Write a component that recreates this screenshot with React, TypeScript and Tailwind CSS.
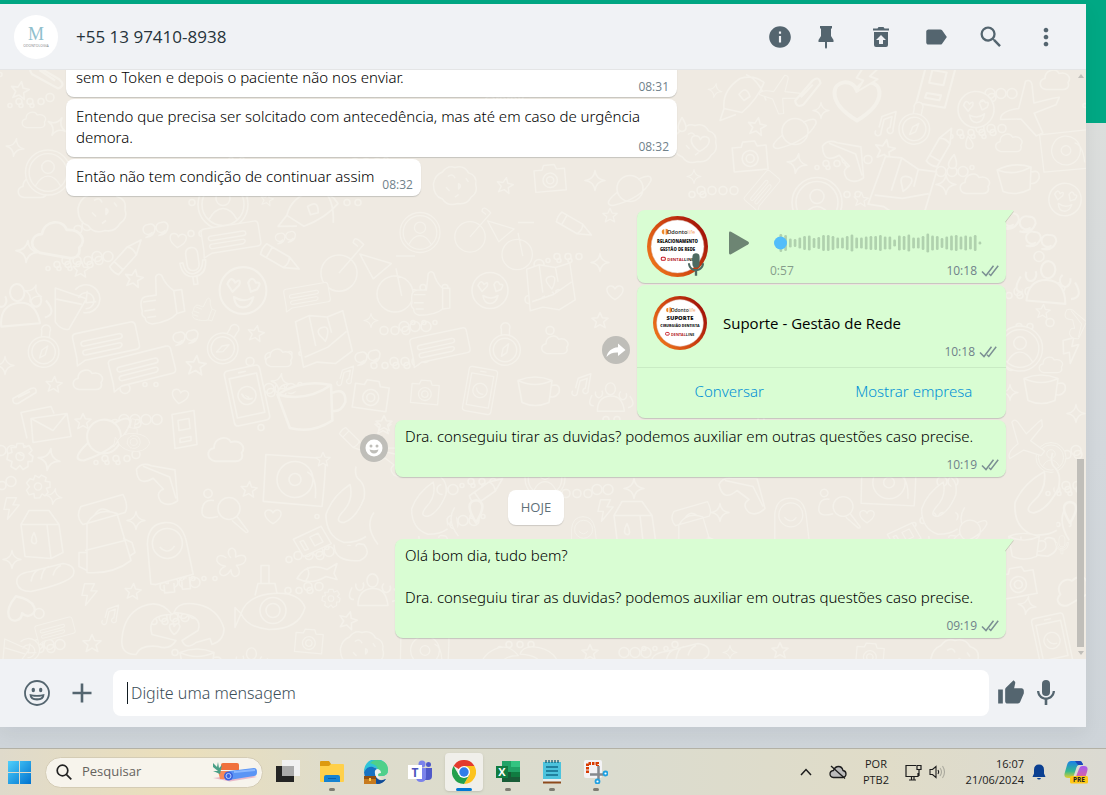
import type { ReactNode } from 'react';
import { MdInfo, MdLabel, MdMoreVert, MdSearch, MdThumbUp } from 'react-icons/md';

const WAVE = [
  18, 16, 9, 8, 11, 14, 15, 10, 12, 16, 16, 14, 11, 11, 14, 17, 11, 11, 13, 14, 14, 16, 13, 13, 7, 15, 14, 17, 11,
  11, 14, 19, 15, 14, 10, 13, 15, 16, 13, 15, 13, 16, 3,
];

// Line doodles of the chat wallpaper, each drawn around 0,0
const SHAPES: Record<string, ReactNode> = {
  star: <path d="M0-9 2.6-3 9-2.6 4 1.6 5.8 8 0 4.6-5.8 8-4 1.6-9-2.6-2.6-3Z" />,
  spark: <path d="M0-10Q1-1 10 0 1 1 0 10-1 1-10 0-1-1 0-10Z" />,
  heart: <path d="M0 8C-5 5-9 1-9-3-9-8-2-9 0-4 2-9 9-8 9-3 9 1 5 5 0 8Z" />,
  cloud: <path d="M-9 9C-17 7-16-1-10-2-10-11 1-13 4-7 12-9 17-3 13 2 15 7 11 9 8 9Z" />,
  bubble: (
    <path d="M-28-14H28Q32-14 32-10V10Q32 14 28 14H-24L-33 18-32 10V-10Q-32-14-28-14ZM-22-5H14Q17-5 17-2.500T14 0H-22Q-25 0-25-2.500T-22-5ZM-22 4H12Q15 4 15 6T12 9H-22Q-25 9-25 6.500T-22 4Z" />
  ),
  pencil: <path d="M-18-5H6L19 0 6 6H-18Q-20 0-18-5ZM-12-5V6M6-5Q9 0 6 6" />,
  mic: <path d="M0-16Q6-16 6-9V0Q6 7 0 7T-6 0V-9Q-6-16 0-16ZM-13-2Q-12 13 0 13T13-2H10Q9 9 0 10T-10-2ZM-2 13V21H2V13" />,
  thumb: (
    <path d="M-20 8Q-22-6-14-6H-4L-2-24Q0-28 4-25 7-14 14-8L22-8V14L14 15Q6 22-12 22-19 20-18 15-22 12-20 8ZM-18-1H-5M-18 8H-7M-16 15H-7M14-8V15" />
  ),
  face: <path d="M-18 0A18 18 0 1 0 18 0 18 18 0 1 0-18 0ZM-12-5Q-9-12-6-6-1-10-3-4L-8 1ZM4-6Q7-12 10-6 15-7 11-1L6 1ZM-7 5Q1 10 8 5 6 13 0 13T-7 5Z" />,
  camera: <path d="M-17-10H-8L-6-15H6L8-10H17V14H-17ZM-8 2A8 8 0 1 0 8 2 8 8 0 1 0-8 2ZM-4 2A4 4 0 1 0 4 2 4 4 0 1 0-4 2Z" />,
  phone: <path d="M-18-24Q-18-28-14-28H14Q18-28 18-24V24Q18 28 14 28H-14Q-18 28-18 24ZM-14-20H14V20H-14ZM-4-24H4M-9 0A9 9 0 1 0 9 0 9 9 0 1 0-9 0ZM-5-3Q-3 5 5 4" />,
  compass: <path d="M-17 5A17 17 0 1 0 17 5 17 17 0 1 0-17 5ZM-13 5A13 13 0 1 0 13 5 13 13 0 1 0-13 5ZM4-2 2 8-4 12-2 3ZM-4-12V-18A5 5 0 1 1 5-18V-12" />,
  disc: <path d="M-25 0A25 25 0 1 0 25 0 25 25 0 1 0-25 0ZM-21 0A21 21 0 1 0 21 0 21 21 0 1 0-21 0ZM-7-6A7 7 0 1 0 7-6 7 7 0 1 0-7-6ZM-14 15Q-8 4 0 4T14 15" />,
  drink: <path d="M-18-14 14-6-1 26Q-8 28-15 20ZM-16-3 10 0M2-14A14 14 0 1 1 12 8M6-6A8 8 0 1 1 14 4M14-14V-2L24-4" />,
  bike: <path d="M-19 8A19 19 0 1 0 19 8 19 19 0 1 0-19 8ZM0 8 26-22Q16-33 15-24L20-20M22-12 55-2 36 14ZM60 3 66 32M60-10H80M40 30A19 19 0 1 0 78 30 19 19 0 1 0 40 30Z" />,
  map: <path d="M-26-18-12-23 6-20 22-25 28 16 10 27-8 24-22 28ZM-20 18 4 10 24-4M-12-23-8 8M6-20 9-4M-1 0Q-8-8 0-10T4 0L2 4Z" />,
  rocket: <path d="M-20 12Q-22-6-4-18 10-22 20-14 14 2-2 16ZM2-22Q16-16 22 4M-20 12-24 24-8 18M-5-2Q2-12 6 0L0 4Z" />,
  planet: <path d="M-13 0A13 13 0 1 0 13 0 13 13 0 1 0-13 0ZM-13 4Q-28 16-17 17 12 10 21-8 22-16 8-9" />,
  glasses: <path d="M-26-12Q-22-20-12-18L12-18 20 12Q12 20 4 16-4 8 4 3L-8-6Q-22 6-26-12ZM-20-16 8-10 18 10" />,
  plane: <path d="M-4-26Q2-30 4-20L8-6 26-14 32-16 30-8 10 4 22 22 16 26-2 12-22 16Q-24 8-6 2Z" />,
  mug: <path d="M-17-10Q0-17 17-10L14 12Q0 18-13 12ZM-17-10Q0-2 17-10M17-5Q26-7 24 2 20 8 15 6" />,
  envelope: <path d="M-18-8 18-13 22 10-16 16ZM-18-8 4 4 18-13M-22 12-28-14 2-20 5-13" />,
  paw: <path d="M-6-8Q-18-10-18 4-17 12-2 8M-2 0A11 11 0 1 0 20 0 11 11 0 1 0-2 0ZM17 8 26 20Q30 24 26 24L12 12M-16-14A4 4 0 1 0-8-16 4 4 0 1 0-16-14Z" />,
  gear: <path d="M-3-13H3L4-9 9-11 12-6 9-3 13 0 12 5 8 5 8 10 3 13 0 9-4 13-9 10-8 5-13 3-12-3-8-4-9-9-4-9ZM-4 0A4 4 0 1 0 4 0 4 4 0 1 0-4 0Z" />,
  bag: <path d="M-20-24 22-36Q28-24 24-18L-18-6Q-26-14-20-24ZM-14-7Q-4-24 16-17L30 30Q12 44-14 42ZM-16 20 24 10M-6-16Q0-26 10-18M-14 22H-22V36L-14 40M22 8 31 12 34 22 28 26" />,
  carton: <path d="M-20-10-12-24H8L18-10 22 18 10 24-16 22ZM-20-10H6L18-10M6-10 10 24M-7-2Q-12 8-7 9T-7-2Z" />,
  bread: <path d="M-28 8Q-30-2-14-4L18-12Q32-10 28 0 22 8-14 16-26 16-28 8ZM-14 6Q-12-4-6-6M-4 4Q-2-8 4-9M8 0Q10-8 16-10" />,
  person: <path d="M-19 32V-8Q-17-28 0-28T20-8L24 26-14 33ZM-14-7A15 15 0 1 0 16-7 15 15 0 1 0-14-7ZM-7-4Q1 5 8-4M-6 34V42H4V33M12 32V40H20V28" />,
  hands: <path d="M-52 18Q-50-6-32-14T-2-6Q-28-6-22 14L2 20Q-4 30-16 26-34 24-38 34-54 34-52 18ZM50 8Q44-12 24-16T0-8Q30-6 24 10L8 20Q12 30 22 22L36 18 38 24Q50 20 50 8ZM0 14Q-6 8-4 4 0 2 0 6 4 0 6 6 4 12 0 14Z" />,
  flower: <path d="M0-5C-10-16 8-22 5-6 20-14 20 4 6 3 16 14 0 22 0 8-8 22-20 10-6 4-22 2-16-14-5-5" />,
  record: <path d="M-30-24 30-22Q30 0 28 26L-31 23ZM-18 0A18 18 0 1 0 18 0 18 18 0 1 0-18 0ZM-6 0A6 6 0 1 0 6 0 6 6 0 1 0-6 0ZM12-8Q22-4 21 18" />,
  submarine: <path d="M-32 6Q-26-12 0-14T32 0Q26 22-4 22-26 20-32 6ZM-13 3A13 13 0 1 0 13 3 13 13 0 1 0-13 3ZM-7 3A7 7 0 1 0 7 3 7 7 0 1 0-7 3ZM-18-12-15-24H2L4-14M-12-24V-42H-4V-24M-32 6-38 0V20Z" />,
  octopus: <path d="M4-44Q2-34 8-30 14-24 12-12 4 8-8 12-18 12-10 2 2-10-2-26-20-14-26 4-26 26-8 32 6 32 14 26M22 2Q12 16 26 34M-18 34Q-18 52 8 50 20 44 12 34 4 32 4 36" />,
  people: <path d="M-14 12Q-14-4 0-5T16 12ZM-5-13A5 6 0 1 0 6-13 5 6 0 1 0-5-13ZM-18 6Q-26 6-20-6M20 8Q30 6 22-5M-16-10A4 5 0 1 0-9-11M12-10A4 5 0 1 0 18-8" />,
  fish: <path d="M-20 5Q-10-12 10-4L20-10 17 0 20 6 9 3Q-6 12-20 5ZM-10-6Q-6 0-11 7" />,
  bolt: <path d="M-6-12H5L1-4H8L-5 12-3 1H-9Z" />,
  note: <path d="M-8 6A3 3 0 1 0-3 8L0-5 8-8 6 3A3 3 0 1 0 9 5L12-13-2-8-5 3" />,
  clip: <path d="M-12 4 6-6Q12-8 11-2L-7 9Q-13 10-12 4ZM-7 3 5-3" />,
  card: <path d="M-11-16 11-20 14 14-8 18ZM-5-10 6-12 7-2-4 0ZM-3 8 8 6V10L-3 12Z" />,
  quote: <path d="M-7-5A5 5 0 1 0-3 3Q-5 7-9 8 0 7 0-2-2-7-7-5ZM6-7A5 5 0 1 0 10 1Q8 5 4 6 13 5 13-4 11-9 6-7Z" />,
  cookie: <path d="M-24-2Q-22-12-14-15-8-23 0-20 10-23 15-14 25-11 23-1 26 8 18 13 13 22 3 20-8 24-14 15-24 12-24-2ZM-8-10Q-2-14 0-8M4-2Q8 0 4 4ZM-10 2-6 6M4 10 0 13M12-8 15-4" />,
  drop: <path d="M0-7Q8 6 0 7-8 6 0-7Z" />,
};

const DOODLES: [string, number, number, number, number][] = [
  ['star', 20, 90, 1, 10], ['clip', 48, 76, 1.4, 60], ['cloud', 33, 188, 1, 0], ['cloud', 34, 120, 0.8, 0],
  ['spark', 15, 147, 0.9, 10], ['spark', 57, 126, 1, 30], ['disc', 48, 172, 0.9, 0], ['cookie', 102, 210, 1, 0],
  ['cloud', 58, 240, 1.7, 10], ['disc', 223, 204, 1, 0], ['rocket', 312, 210, 1.1, 20], ['star', 267, 199, 0.7, 10],
  ['spark', 27, 251, 1.1, 5], ['star', 81, 269, 0.9, 5], ['pencil', 127, 255, 1.1, -48], ['quote', 155, 229, 1, 0],
  ['heart', 178, 240, 0.9, 5], ['star', 134, 278, 1, 10], ['mic', 193, 263, 1, -8], ['bubble', 231, 237, 0.9, -9],
  ['pencil', 281, 258, 1.1, 30], ['quote', 285, 237, 0.8, 0], ['thumb', 161, 300, 1, -8], ['face', 243, 290, 1.3, 0],
  ['people', 18, 309, 1.3, -5], ['spark', 33, 293, 0.9, 20], ['drink', 72, 303, 1, 5], ['compass', 44, 347, 0.9, 5],
  ['bike', 339, 265, 0.95, 0], ['map', 323, 337, 1, -5], ['bubble', 106, 341, 1, -12], ['bubble', 142, 366, 1, -14],
  ['cloud', 88, 380, 1, 0], ['quote', 185, 337, 1, 0], ['star', 196, 365, 1.1, 5], ['compass', 225, 344, 0.9, 30],
  ['star', 256, 333, 0.9, 10], ['cloud', 279, 358, 0.9, 0], ['phone', 247, 395, 1, -12], ['spark', 280, 382, 0.9, 10],
  ['note', 344, 376, 0.8, 0], ['quote', 367, 357, 1, 0], ['camera', 371, 395, 1, 8], ['mug', 307, 405, 1.6, -10],
  ['heart', 180, 396, 0.9, 10], ['star', 54, 384, 0.9, 5], ['clip', 25, 394, 1, 0], ['envelope', 49, 426, 1, 0],
  ['star', 83, 421, 0.9, 0], ['planet', 104, 436, 1.3, -5], ['submarine', 134, 440, 0.5, 10], ['card', 183, 430, 1, 0],
  ['spark', 5, 365, 0.9, 0], ['spark', 371, 320, 0.7, 0], ['bubble', 307, 295, 0.7, -10], ['thumb', 204, 310, 0.5, 20],
  ['gear', 20, 456, 1, 0], ['spark', 49, 459, 1.1, 10], ['gear', 38, 486, 0.9, 30], ['spark', 54, 496, 0.8, 10],
  ['bolt', 12, 508, 0.9, 0], ['carton', 41, 534, 1, 0], ['bag', 101, 530, 1, 0], ['bread', 45, 575, 1, 0],
  ['spark', 12, 559, 0.9, 0], ['glasses', 160, 485, 1, 10], ['spark', 136, 520, 0.9, 0], ['person', 167, 550, 1, -5],
  ['cloud', 226, 450, 1.2, 0], ['paw', 220, 508, 1, 0], ['star', 249, 489, 0.9, 5], ['record', 295, 479, 1, 2],
  ['heart', 273, 516, 0.9, 0], ['flower', 231, 562, 0.9, 0], ['card', 311, 540, 0.9, 70], ['octopus', 352, 510, 1, 0],
  ['fish', 317, 573, 1, 0], ['submarine', 273, 607, 1, 0], ['people', 372, 593, 1, 0], ['gear', 331, 598, 0.7, 0],
  ['star', 348, 620, 1, 15], ['hands', 174, 620, 1, 0], ['star', 133, 591, 0.9, 5], ['bolt', 90, 594, 0.9, 0],
  ['note', 109, 615, 0.8, 0], ['star', 92, 643, 1, 0], ['heart', 20, 607, 1.5, 160], ['bubble', 55, 629, 0.6, -15],
  ['camera', 309, 641, 0.8, 5], ['cookie', 362, 650, 0.9, 0], ['drink', 17, 652, 0.8, 10], ['mug', 197, 662, 1, 0],
  ['star', 323, 459, 0.8, 0], ['pencil', 353, 440, 0.8, 45], ['star', 383, 426, 0.9, 0], ['people', 251, 665, 0.9, 0],
  ['cookie', 695, 143, 0.9, 0], ['rocket', 744, 96, 1, 0], ['plane', 778, 92, 0.7, 30], ['clip', 808, 90, 1.3, -20],
  ['heart', 857, 100, 2.5, 0], ['bolt', 867, 80, 1.2, 20], ['card', 934, 84, 1.3, 20], ['face', 976, 109, 1, -5],
  ['plane', 1025, 107, 1, 10], ['cloud', 1055, 80, 1, 0], ['spark', 715, 90, 0.7, 10], ['spark', 821, 110, 0.8, 0],
  ['star', 757, 126, 1, 10], ['planet', 795, 131, 1, 0], ['camera', 750, 156, 1, -5], ['note', 884, 124, 1, 0],
  ['compass', 915, 124, 0.9, 10], ['pencil', 941, 146, 1.1, -60], ['star', 885, 149, 1.1, 10], ['glasses', 846, 162, 1, 10],
  ['spark', 797, 163, 1, 10], ['spark', 694, 176, 0.7, 0], ['bubble', 762, 189, 0.6, -50], ['disc', 817, 202, 1, 0],
  ['star', 861, 199, 0.8, 5], ['map', 903, 186, 1.1, 25], ['spark', 946, 184, 1, 0], ['cloud', 1009, 143, 0.9, 0],
  ['mug', 1015, 178, 1, -5], ['record', 1066, 150, 0.8, -8], ['face', 1065, 199, 0.9, 5], ['drop', 969, 142, 0.9, -10],
  ['drop', 953, 161, 1, 10], ['cloud', 975, 184, 1, 0], ['drop', 682, 124, 1, 0], ['heart', 700, 143, 1, 5],
  ['quote', 1018, 222, 1.3, 20], ['quote', 1040, 240, 1.2, 20], ['people', 1046, 286, 1.3, 5], ['star', 1043, 311, 0.8, 5],
  ['disc', 1020, 348, 0.9, 0], ['bolt', 1072, 350, 1, -15], ['cloud', 1051, 365, 0.8, 0], ['mug', 1041, 388, 1, 0],
  ['spark', 1076, 413, 0.9, 0], ['spark', 1010, 392, 0.8, 0], ['glasses', 1074, 325, 0.6, 40],
  ['disc', 1051, 457, 0.6, 0], ['plane', 1022, 440, 0.8, -20], ['octopus', 1044, 500, 1.1, 5], ['drop', 1070, 512, 1.5, 180],
  ['mic', 1062, 543, 0.5, 0], ['mug', 1024, 545, 0.9, 0], ['camera', 1018, 582, 1, -10], ['spark', 1027, 605, 0.9, 10],
  ['cloud', 1072, 590, 1.2, -30], ['phone', 1052, 640, 0.9, -12],
  ['star', 384, 423, 0.9, 0], ['glasses', 391, 462, 0.8, 0], ['record', 889, 482, 0.9, 0], ['octopus', 945, 505, 0.9, 0],
  ['heart', 867, 516, 0.8, 0], ['card', 903, 535, 0.8, 70], ['pencil', 487, 489, 1, -35], ['disc', 545, 478, 0.8, 0],
  ['drop', 476, 511, 1.6, 180], ['bolt', 606, 510, 0.9, 0], ['carton', 634, 525, 1, 0], ['person', 583, 533, 0.6, 0],
  ['octopus', 435, 505, 0.9, 0], ['spark', 634, 488, 1, 0], ['bag', 690, 530, 0.8, 0], ['glasses', 745, 496, 1, 0],
  ['person', 790, 520, 0.8, 0], ['paw', 835, 506, 0.9, 0], ['spark', 720, 512, 0.9, 0], ['planet', 970, 530, 0.8, 0],
  ['record', 425, 650, 0.8, 0], ['hands', 520, 660, 0.8, 0], ['star', 590, 652, 0.9, 0], ['bread', 680, 655, 1, 0],
  ['star', 780, 650, 0.9, 0], ['camera', 870, 655, 0.8, 5], ['cookie', 955, 660, 1, 0], ['spark', 730, 652, 0.7, 0],
  ['cookie', 455, 185, 0.9, 0], ['star', 505, 185, 0.9, 10], ['camera', 550, 178, 0.9, -5], ['spark', 595, 180, 1, 0],
  ['planet', 630, 188, 1, 0], ['disc', 420, 232, 0.8, 0], ['bike', 470, 230, 0.8, 0], ['pencil', 575, 225, 1, 30],
  ['star', 610, 215, 0.8, 0], ['thumb', 430, 295, 0.9, 0], ['face', 490, 290, 1, 0], ['map', 550, 285, 0.9, 0],
  ['spark', 600, 262, 0.9, 0], ['heart', 615, 292, 0.9, 0], ['bubble', 440, 345, 0.9, -12], ['compass', 505, 345, 0.9, 0],
  ['cloud', 555, 345, 0.9, 0], ['star', 600, 320, 0.9, 0], ['camera', 425, 392, 0.8, 5], ['phone', 480, 390, 0.8, 10],
  ['mug', 535, 390, 1, 0], ['note', 580, 385, 0.9, 0], ['people', 610, 400, 0.9, 0],
];

const DOTS = Array.from({ length: 430 }, (_, i) => ({
  x: (i * 173 + (i % 7) * 19) % 1086,
  y: 74 + ((i * 97 + (i % 11) * 31) % 582),
  r: 2 + (i % 4),
}));

function Wallpaper() {
  return (
    <svg
      className="absolute inset-0 h-full w-full"
      viewBox="0 69 1086 590"
      preserveAspectRatio="xMidYMid slice"
      fill="none"
      stroke="#f4f1ea"
      strokeWidth="1.600"
      strokeLinejoin="round"
      aria-hidden="true"
    >
      {DOTS.map((d, i) => (
        <circle key={i} cx={d.x} cy={d.y} r={d.r} />
      ))}
      {DOODLES.map(([kind, x, y, scale, turn], i) => (
        <g key={i} transform={`translate(${x} ${y}) rotate(${turn}) scale(${scale})`} fill="#efeae2">
          {SHAPES[kind]}
        </g>
      ))}
    </svg>
  );
}

function PinIcon() {
  return (
    <svg viewBox="0 0 26 26" className="h-[26px] w-[26px]" fill="currentColor">
      <path d="M7 2h12v2l-1 1v7l2.500 4v2H14v5.500l-1 1.500-1-1.500V18H5.500v-2L8 12V5L7 4Z" />
    </svg>
  );
}

function TrashIcon() {
  return (
    <svg viewBox="0 0 26 26" className="h-[26px] w-[26px]" fill="currentColor">
      <path d="M5 4.500h4.500L10.500 3h5l1 1.500H21v2H5Z" />
      <path
        fillRule="evenodd"
        d="M6 8h14v13a2 2 0 0 1-2 2H8a2 2 0 0 1-2-2V8Zm7 3-5 5h3v4h4v-4h3l-5-5Z"
      />
    </svg>
  );
}

function MicIcon({ className }: { className: string }) {
  return (
    <svg viewBox="0 0 20 26" className={className} fill="currentColor">
      <rect x="6" y="0" width="8" height="16" rx="4" />
      <path d="M1 11h2.300c.3 4 3.200 6.500 6.700 6.500s6.400-2.500 6.700-6.500H19c-.3 4.700-3.400 8-7.700 8.700V25H8.700v-5.300C4.400 19 1.300 15.700 1 11Z" />
    </svg>
  );
}

function Checks() {
  return (
    <svg viewBox="0 0 18 12" className="h-3 w-[18px]" fill="none" stroke="#7b8f93" strokeWidth="1.500">
      <path d="m1 6.500 4 4L12.500.800M8 8.800l1.800 1.700L17.200.800" />
    </svg>
  );
}

function Stamp({ time, sent }: { time: string; sent?: boolean }) {
  return (
    <span className="flex items-center gap-1 font-['Open_Sans',sans-serif] text-xs leading-4 font-normal text-[#70818a]">
      {time}
      {sent && <Checks />}
    </span>
  );
}

function Tail() {
  return (
    <svg viewBox="0 0 9 13" className="absolute -right-2 top-0 h-[13px] w-[9px]" aria-hidden="true">
      <path d="M0 0h7.500q1.500.5.500 2L0 13Z" fill="#d9fdd3" />
      <path d="M8.500 1.500 0 12.500" stroke="#c9cbbb" strokeWidth="1" />
    </svg>
  );
}

function Incoming({ text, time, inline }: { text: string; time: string; inline?: boolean }) {
  if (inline) {
    return (
      <div className="flex items-end gap-2 self-start rounded-lg bg-white pt-[7px] pr-2 pb-[9px] pl-2.5 shadow-[0_1px_1px_rgba(11,20,26,0.18)]">
        <p>{text}</p>
        <div className="-mb-1.5">
          <Stamp time={time} />
        </div>
      </div>
    );
  }
  return (
    <div className="w-[65%] self-start rounded-lg bg-white pt-[7px] pr-2 pb-0.5 pl-2.5 shadow-[0_1px_1px_rgba(11,20,26,0.18)]">
      <p>{text}</p>
      <div className="-mt-[9px] flex justify-end">
        <Stamp time={time} />
      </div>
    </div>
  );
}

function Outgoing({ lines, time, tail }: { lines: string[]; time: string; tail?: boolean }) {
  return (
    <div
      className={`relative w-[65%] self-end rounded-lg bg-[#d9fdd3] pt-1.5 pr-[7px] pb-1 pl-2.5 shadow-[0_1px_1px_rgba(11,20,26,0.18)] ${
        tail ? 'rounded-tr-none' : ''
      }`}
    >
      {tail && <Tail />}
      {lines.map((line, i) => (
        <p key={i} className="min-h-[21px] whitespace-nowrap">
          {line}
        </p>
      ))}
      <div className="mt-2.5 flex justify-end">
        <Stamp time={time} sent />
      </div>
    </div>
  );
}

function Badge({ title, subtitle, className }: { title: string; subtitle: string; className: string }) {
  const big = title === 'SUPORTE';
  return (
    <svg viewBox="0 0 60 60" className={className} fontFamily="'Open Sans', sans-serif" textAnchor="middle">
      <defs>
        <linearGradient id={`ring-${title}`} x1="0" x2="1" y1="0.800" y2="0.200">
          <stop offset="0" stopColor="#f07a1c" />
          <stop offset="0.500" stopColor="#cf4310" />
          <stop offset="1" stopColor="#9c0d08" />
        </linearGradient>
      </defs>
      <circle cx="30" cy="30" r="30" fill={`url(#ring-${title})`} />
      <circle cx="30" cy="30" r="26" fill="#fff" stroke="#d9b8ae" strokeWidth="0.500" />
      <path d="M17 13v5a2.500 2.500 0 0 1 0-5ZM18.300 12.500v6a3 3 0 0 0 0-6Z" fill="#ee8a2c" />
      <text x="33.500" y="17.500" fontSize="5.500" fill="#222" fontWeight="600">
        Odonto<tspan fill="#f3a36a" fontWeight="400">life</tspan>
      </text>
      <text x="30" y={big ? 26.500 : 27} fontSize={big ? 6.500 : 4.200} fontWeight="800" fill="#111">
        {title}
      </text>
      <text x="30" y="34" fontSize={big ? 4 : 4.200} fontWeight="800" fill="#222">
        {subtitle}
      </text>
      <rect x="14" y="40.500" width="4" height="3" rx="1" fill="none" stroke="#c4121f" />
      <text x="33" y="44" fontSize="4.200" fontWeight="700" fill="#b31b24">
        DENTAL<tspan fill="#222">LINE</tspan>
      </text>
    </svg>
  );
}

function VoiceMessage() {
  return (
    <div className="relative mt-3 flex h-[73px] w-[369px] self-end rounded-lg rounded-tr-none bg-[#d9fdd3] pr-[7px] pl-2.5 shadow-[0_1px_1px_rgba(11,20,26,0.18)]">
      <Tail />
      <div className="relative mt-1.5 h-[61px] w-[61px]">
        <Badge title="RELACIONAMENTO" subtitle="GESTÃO DE REDE" className="h-[61px] w-[61px]" />
        <MicIcon className="absolute right-[3px] bottom-0 h-6 w-[18px] text-[#4d6a62]" />
      </div>
      <button type="button" aria-label="Reproduzir" className="mt-[21px] ml-[21px] h-6 w-5 text-[#6d8573]">
        <svg viewBox="0 0 20 24" className="h-6 w-5" fill="currentColor">
          <path d="M0 2Q0 0 2 .800L19 10.500q2 1.500 0 3L2 23.200Q0 24 0 22Z" />
        </svg>
      </button>
      <div className="ml-[21px] flex flex-1 flex-col pt-[23px]">
        <svg viewBox="0 0 216 20" className="h-5 w-[216px]" aria-hidden="true">
          {WAVE.map((h, i) => (
            <rect key={i} x={9.500 + i * 4.740} y={10 - h / 2} width="2.700" height={h} rx="1.300" fill="#b0d1ae" />
          ))}
          <circle cx="10.500" cy="10" r="6.500" fill="#53bdfa" />
        </svg>
        <div className="mt-2 flex justify-between">
          <span className="font-['Open_Sans',sans-serif] text-xs leading-5 font-normal text-[#869c8b]">0:57</span>
          <Stamp time="10:18" sent />
        </div>
      </div>
    </div>
  );
}

function ContactMessage() {
  return (
    <div className="relative w-[369px] self-end rounded-lg bg-[#d9fdd3] shadow-[0_1px_1px_rgba(11,20,26,0.18)]">
      <button
        type="button"
        aria-label="Encaminhar"
        className="absolute top-[51px] -left-[35px] flex h-7 w-7 items-center justify-center rounded-full bg-[#bfbeb9] text-white"
      >
        <svg viewBox="0 0 20 16" className="h-4 w-5" fill="currentColor">
          <path d="M12 1.500 19.500 8 12 14v-3.500C7 10.300 3.500 11.500.500 15 1.500 9.500 5.500 5.800 12 5.200Z" />
        </svg>
      </button>
      <div className="flex h-[83px] items-start border-b border-[#c9ebc4] pt-[11px] pr-[9px] pl-4">
        <Badge title="SUPORTE" subtitle="CIRURGIÃO DENTISTA" className="h-[54px] w-[54px]" />
        <p className="mt-[17px] ml-4 flex-1 font-['Open_Sans',sans-serif] font-medium">Suporte - Gestão de Rede</p>
        <div className="mt-12 -ml-10">
          <Stamp time="10:18" sent />
        </div>
      </div>
      <div className="grid h-[50px] grid-cols-2 text-[#0090d6]">
        <button type="button" className="pb-1">Conversar</button>
        <button type="button" className="pb-1">Mostrar empresa</button>
      </div>
    </div>
  );
}

function Header() {
  const action = 'flex h-[26px] w-[26px] items-center justify-center';
  return (
    <header className="flex h-[66px] shrink-0 items-center border-b border-[#e4e5e6] bg-[#f0f2f5] pr-[27px] pl-3.5 text-[#54656f]">
      <svg viewBox="0 0 44 44" className="h-11 w-11 rounded-full bg-white" textAnchor="middle">
        <text x="22" y="25" fontSize="18" fill="#8fc0cd" fontFamily="'Liberation Serif', serif">
          M
        </text>
        <text x="22" y="32" fontSize="3.500" fill="#7f8487" fontFamily="'Open Sans', sans-serif">
          ODONTOLOGIA
        </text>
      </svg>
      <h1 className="ml-[18px] flex-1 text-[17px] text-[#26323a]">+55 13 97410-8938</h1>
      <div className="flex items-center gap-[29px]">
        <div className="flex gap-5">
          <button type="button" aria-label="Dados do contato" className={action}>
            <MdInfo size={26} />
          </button>
          <button type="button" aria-label="Fixar" className={action}>
            <PinIcon />
          </button>
        </div>
        <button type="button" aria-label="Apagar" className={action}>
          <TrashIcon />
        </button>
        <button type="button" aria-label="Etiquetar" className={action}>
          <MdLabel size={26} />
        </button>
        <button type="button" aria-label="Pesquisar" className={action}>
          <MdSearch size={28} className="shrink-0" />
        </button>
        <button type="button" aria-label="Mais opções" className={action}>
          <MdMoreVert size={28} className="shrink-0" />
        </button>
      </div>
    </header>
  );
}

function Chat() {
  return (
    <main className="relative flex min-h-0 flex-1 flex-col overflow-hidden bg-[#efeae2]">
      <Wallpaper />
      <div className="relative flex min-h-0 flex-1 flex-col justify-end gap-0.5 pr-20 pb-[21px] pl-[66px] font-['Noto_Sans',sans-serif] text-[15px] leading-[21px] font-light text-black *:shrink-0">
        <Incoming text="sem o Token e depois o paciente não nos enviar." time="08:31" />
        <Incoming
          text="Entendo que precisa ser solcitado com antecedência, mas até em caso de urgência demora."
          time="08:32"
        />
        <Incoming text="Então não tem condição de continuar assim" time="08:32" inline />
        <VoiceMessage />
        <ContactMessage />
        <div className="relative flex flex-col">
          <Outgoing lines={['Dra. conseguiu tirar as duvidas? podemos auxiliar em outras questões caso precise.']} time="10:19" />
          <button
            type="button"
            aria-label="Reagir"
            className="absolute top-3.5 right-[618px] flex h-7 w-7 items-center justify-center rounded-full bg-[#bfbeb9]"
          >
            <svg viewBox="0 0 18 18" className="h-[18px] w-[18px]" fill="#bfbeb9">
              <circle cx="9" cy="9" r="8.500" fill="#fff" />
              <circle cx="6" cy="7" r="1.500" />
              <circle cx="12" cy="7" r="1.500" />
              <path d="M4.500 10.500q4.500 1.500 9 0-1 4-4.500 4t-4.500-4Z" />
            </svg>
          </button>
        </div>
        <div className="mt-[11px] mb-3 self-center rounded-lg bg-white px-[13px] py-[7px] font-['Open_Sans',sans-serif] text-[13px] font-normal text-[#5f7079] shadow-[0_1px_1px_rgba(11,20,26,0.15)]">
          HOJE
        </div>
        <Outgoing
          lines={[
            'Olá bom dia, tudo bem?',
            '',
            'Dra. conseguiu tirar as duvidas? podemos auxiliar em outras questões caso precise.',
          ]}
          time="09:19"
          tail
        />
      </div>
      <div className="absolute inset-y-0 right-0.5 flex w-[7px] flex-col items-center justify-between py-1">
        <div className="border-x-[3px] border-b-4 border-x-transparent border-b-[#c0beb9]" />
        <div className="flex flex-col items-center gap-1">
          <div className="h-[188px] w-[7px] bg-[#c0beb9]" />
          <div className="border-x-[3px] border-t-4 border-x-transparent border-t-[#c0beb9]" />
        </div>
      </div>
    </main>
  );
}

function Composer() {
  return (
    <footer className="flex h-[68px] shrink-0 items-center bg-[#f0f2f5] pr-[30px] pl-6 text-[#54656f]">
      <button type="button" aria-label="Emojis">
        <svg viewBox="0 0 26 26" className="h-[26px] w-[26px]" fill="currentColor">
          <circle cx="13" cy="13" r="12" fill="none" stroke="currentColor" strokeWidth="1.800" />
          <ellipse cx="9.300" cy="10" rx="1.700" ry="2.200" />
          <ellipse cx="16.700" cy="10" rx="1.700" ry="2.200" />
          <path fillRule="evenodd" d="M5.500 14q7.500 2 15 0 0 6.500-7.500 6.500T5.500 14Zm2.300 2.200q5.200 1.300 10.400 0-.8 1.300-2 1.700-3.200.600-6.400 0-1.300-.5-2-1.700Z" />
        </svg>
      </button>
      <button type="button" aria-label="Anexar" className="ml-[22px]">
        <svg viewBox="0 0 20 20" className="h-5 w-5" stroke="currentColor" strokeWidth="2.600">
          <path d="M10 .5v19M.5 10h19" />
        </svg>
      </button>
      <label className="ml-[21px] flex h-[46px] flex-1 items-center rounded-lg bg-white px-3.5">
        <span className="h-[22px] w-px bg-[#111b21]" />
        <input
          type="text"
          aria-label="Mensagem"
          placeholder="Digite uma mensagem"
          className="ml-[3px] flex-1 font-['Noto_Sans',sans-serif] text-base font-light outline-none placeholder:text-[#3c4e58]"
        />
      </label>
      <button type="button" aria-label="Curtir" className="ml-2">
        <MdThumbUp size={28} />
      </button>
      <button type="button" aria-label="Gravar áudio" className="ml-[11px]">
        <MicIcon className="h-[26px] w-5" />
      </button>
    </footer>
  );
}

const APPS: { name: string; state?: 'open' | 'active'; icon: ReactNode }[] = [
  {
    name: 'Visão de tarefas',
    icon: (
      <>
        <path d="M0 6h18v16H0Z" fill="#242424" />
        <path d="M6 0h18v16H6Z" fill="#f1f1f1" />
        <path d="M6 6h12v10H6Z" fill="#aaa" />
      </>
    ),
  },
  {
    name: 'Explorador de Arquivos',
    state: 'open',
    icon: (
      <>
        <path d="M0 2q0-1 1-1h8l2 3v4H0Z" fill="#dd9a10" />
        <path d="M0 6h9l2-2h12q1 0 1 1v16q0 1-1 1H1q-1 0-1-1Z" fill="#ffd04a" />
        <path d="M4 22v-5q0-2 2-2h12q2 0 2 2v5Z" fill="#1583d1" />
        <path d="M8 18h8v1H8Z" fill="#0b5ea8" />
      </>
    ),
  },
  {
    name: 'Edge',
    icon: (
      <>
        <path d="M0 12A12 12 0 0 1 24 10q0 6-7 6-5 0-3-4-1-5-6-5-5 0-8 5Z" fill="#2fc3d8" />
        <path d="M12 0q12 0 12 10 0 6-7 6-5 0-3-4 1-7-8-9 3-3 6-3Z" fill="#4fd08a" />
        <path d="M0 12q3-6 9-5 5 1 5 5-4 1-2 6 4 5 10 1-4 5-10 5Q1 24 0 12Z" fill="#1672c4" />
        <path d="M11 14q-1-5 3-5 3 1 3 4-3 0-3 2 0 3 4 3-5 2-7-4Z" fill="#eef3f2" />
        <path d="M12 17q3 5 10 2-3 5-9 5-3-4-1-7Z" fill="#124c96" />
        <path d="M0 16h12v8H0Z" fill="#c77a1e" />
        <path d="M0 16h12v3H0Z" fill="#8d4d12" />
        <path d="M5 18h2v3H5Z" fill="#ffd24d" />
      </>
    ),
  },
  {
    name: 'Teams',
    icon: (
      <>
        <circle cx="14" cy="4" r="3.500" fill="#7b83eb" />
        <circle cx="20.500" cy="4.500" r="2.500" fill="#5059c9" />
        <path d="M16 8h8v8q0 4-4 4h-4Z" fill="#5059c9" />
        <path d="M8 8h10v9q0 5-5 5t-5-5Z" fill="#7b83eb" />
        <path d="M0 5h14v14H0Z" fill="#fff" />
        <text x="7" y="16.500" fontSize="12" fontWeight="700" textAnchor="middle" fill="#4b53bc">
          T
        </text>
      </>
    ),
  },
  {
    name: 'Chrome',
    state: 'active',
    icon: (
      <>
        <path d="M12 12 1.600 6A12 12 0 0 1 22.400 6Z" fill="#e33b2e" />
        <path d="M12 12V6h10.400A12 12 0 0 1 12 24l5.200-9Z" fill="#fcc31e" />
        <path d="m12 12 5.200 3L12 24A12 12 0 0 1 1.600 6l5.200 9Z" fill="#22a04b" />
        <circle cx="12" cy="12" r="6" fill="#fff" />
        <circle cx="12" cy="12" r="4.700" fill="#2f7de9" />
      </>
    ),
  },
  {
    name: 'Excel',
    state: 'open',
    icon: (
      <>
        <path d="M6 1h9v11H6Z" fill="#21a366" />
        <path d="M15 1h9v6h-9Z" fill="#33c481" />
        <path d="M15 7h9v5h-9Z" fill="#21a366" />
        <path d="M6 12h18v10H6Z" fill="#185c37" />
        <path d="M15 12h9v5h-9Z" fill="#107c41" />
        <path d="M0 6h12v12H0Z" fill="#107c41" />
        <text x="6" y="16" fontSize="11" fontWeight="700" textAnchor="middle" fill="#fff">
          X
        </text>
      </>
    ),
  },
  {
    name: 'Bloco de notas',
    state: 'open',
    icon: (
      <>
        <path d="M3 2h18v20H3Z" fill="#4cc3dd" />
        <path d="M3 19h18v3H3Z" fill="#e8eef0" />
        <path d="M3 21.500h18v2H3Z" fill="#8d4a1c" />
        <path d="M6 0v3M9 0v3M12 0v3M15 0v3M18 0v3" stroke="#145d75" strokeWidth="1.300" />
        <path d="M6 7h12M6 11h12M6 15h12" stroke="#126c8b" strokeWidth="1.500" />
      </>
    ),
  },
  {
    name: 'Captura',
    state: 'open',
    icon: (
      <>
        <rect x="0" y="0" width="18" height="18" rx="2" fill="#f3f3f5" />
        <path d="M3.500 13V3.500h10V6" fill="none" stroke="#d83b01" strokeWidth="3" strokeDasharray="2.500 1" />
        <path d="M14.500 6v13M6 14.500h13" stroke="#85898d" strokeWidth="2.500" />
        <circle cx="21.500" cy="13.500" r="2" fill="#fff" stroke="#20a0e0" strokeWidth="1.800" />
        <circle cx="13.500" cy="21.500" r="2" fill="#fff" stroke="#20a0e0" strokeWidth="1.800" />
      </>
    ),
  },
];

function Taskbar() {
  return (
    <nav className="flex h-[47px] shrink-0 items-center border-t border-[#b3b1a5] bg-[linear-gradient(90deg,#dfdacb_0%,#ebdfbb_16%,#dedccb_30%,#dbdccf_55%,#e0dcc8_80%,#dbdad2_100%)] text-[#1c1c1c]">
      <button type="button" aria-label="Iniciar" className="ml-2">
        <svg viewBox="0 0 23 23" className="h-[23px] w-[23px]">
          <defs>
            <linearGradient id="win" x1="0" y1="0" x2="1" y2="1">
              <stop offset="0" stopColor="#4fd0fb" />
              <stop offset="1" stopColor="#0072cf" />
            </linearGradient>
          </defs>
          <path d="M0 0h11v11H0ZM12 0h11v11H12ZM0 12h11v11H0ZM12 12h11v11H12Z" fill="url(#win)" />
        </svg>
      </button>
      <label className="ml-3.5 flex h-[31px] w-[218px] items-center rounded-full border border-[#d4ccb5] bg-[#f7f4ec] pr-1 pl-2.5">
        <svg viewBox="0 0 16 16" className="h-4 w-4" fill="none" stroke="#222" strokeWidth="1.700">
          <circle cx="6.500" cy="6.500" r="5.300" />
          <path d="m10.300 10.300 5 5" />
        </svg>
        <input
          type="search"
          aria-label="Pesquisar no computador"
          placeholder="Pesquisar"
          className="ml-2.5 w-0 flex-1 text-[13px] outline-none placeholder:text-[#65635e]"
        />
        <svg viewBox="0 0 46 20" className="h-5 w-[46px]" aria-hidden="true">
          <path d="M1 16 34 12l11 3-27 4.500Z" fill="#e9b9c9" />
          <path d="M6 9h18v8H8Z" fill="#f9895a" />
          <path d="M9 3q0-2 2-2h14q2 0 2 2v5H9Z" fill="#f0713c" />
          <path d="m1 1 4 4 1-5 1 6 3-3-2 9-7-3 5 0-5-4Z" fill="#4aa087" />
          <path d="m17 9 25-3q3 0 3 4t-3 4l-25 4Z" fill="#5b95f5" />
          <path d="m22 10 21-2" stroke="#8cb9ff" strokeWidth="2" />
          <circle cx="16.500" cy="14" r="4.500" fill="#3c62df" />
          <circle cx="16.500" cy="14" r="2.500" fill="none" stroke="#b9d1ff" />
        </svg>
      </label>
      <div className="ml-[3px] flex">
        {APPS.map((app) => (
          <button
            key={app.name}
            type="button"
            aria-label={app.name}
            className="relative flex h-[46px] w-11 items-center justify-center"
          >
            <span
              className={`flex h-[38px] w-[38px] items-center justify-center rounded ${
                app.state === 'active' ? 'bg-[#f0efea] shadow-sm' : ''
              }`}
            >
              <svg viewBox="0 0 24 24" className="h-6 w-6" fontFamily="'Open Sans', sans-serif">
                {app.icon}
              </svg>
            </span>
            {app.state && (
              <span
                className={`absolute bottom-1 h-[3px] rounded-full ${
                  app.state === 'active' ? 'w-4 bg-[#0078d4]' : 'w-1.5 bg-[#7d7c72]'
                }`}
              />
            )}
          </button>
        ))}
      </div>
      <div className="ml-auto flex items-center pr-[18px] text-[11px] leading-4">
        <button type="button" aria-label="Mostrar ícones ocultos">
          <svg viewBox="0 0 12 8" className="h-2 w-3" fill="none" stroke="currentColor" strokeWidth="1.500">
            <path d="m1 7 5-5.500L11 7" />
          </svg>
        </button>
        <svg viewBox="0 0 18 14" className="ml-[17px] h-3.5 w-[18px]" fill="#bbb" stroke="#1c1c1c" strokeWidth="1.300">
          <path d="M4.500 12.500q-3.500-.5-3.500-3.500T4.500 5.500Q6 1.500 9.500 1.500T14 5.500q3 .5 3 3.500t-3.500 3.500Z" />
          <path d="m2 1 14 12.500" />
        </svg>
        <p className="ml-4 text-center">
          POR
          <br />
          PTB2
        </p>
        <svg viewBox="0 0 17 17" className="ml-4 h-[17px] w-[17px]" fill="none" stroke="currentColor" strokeWidth="1.200">
          <path d="M11 1.500H1v11h12V9M4 16h7M6.500 12.500V16M9 12.500V16M12 1.500h4v4h-4ZM14 5.500V12" />
        </svg>
        <svg viewBox="0 0 17 14" className="ml-[7px] h-3.5 w-[17px]" fill="none" stroke="currentColor" strokeWidth="1.100">
          <path d="M1 4.500h2.500L7 1.500v11L3.500 9.500H1ZM9 5q1.500 2 0 4" />
          <path d="M11 3q3 4 0 8M13.500 1q4 6 0 12" stroke="#aaa99e" />
        </svg>
        <p className="ml-4 w-[62px] text-right">
          16:07
          <br />
          21/06/2024
        </p>
        <svg viewBox="0 0 14 16" className="ml-2 h-4 w-3.5" fill="#0a3f91">
          <path d="M7 .5q5 0 5 5.500v3.500L13.500 13H.5L2 9.500V6Q2 .500 7 .500ZM5 14h4q-.5 1.500-2 1.500T5 14Z" />
        </svg>
        <svg viewBox="0 0 24 24" className="ml-[18px] h-6 w-6">
          <defs>
            <linearGradient id="cop-a" x1="0" y1="0" x2="0" y2="1">
              <stop offset="0" stopColor="#1a7fe8" />
              <stop offset="0.600" stopColor="#35b98f" />
              <stop offset="1" stopColor="#e6cf2c" />
            </linearGradient>
            <linearGradient id="cop-b" x1="0" y1="0" x2="0" y2="1">
              <stop offset="0" stopColor="#a45cf0" />
              <stop offset="1" stopColor="#f2647c" />
            </linearGradient>
          </defs>
          <path d="M7 1h9q2 0 3 4h-4q-2 0-3 4l-2 6q-1 3-4 3H4q-5 0-3-6l2-7Q4 1 7 1Z" fill="url(#cop-a)" />
          <path d="M11 1h5q2 0 3 4h-5Z" fill="#1c46b8" />
          <path d="M18 6h2q5 0 3 6l-2 6q-1 4-5 4H9q-2 0-3-4h4q2 0 3-4l2-5q1-3 3-3Z" fill="url(#cop-b)" />
          <rect x="6" y="16" width="18" height="7.500" rx="1.500" fill="#ffc814" />
          <text x="15" y="22" fontSize="6.500" fontWeight="700" textAnchor="middle" fill="#222" fontFamily="'Open Sans', sans-serif">
            PRE
          </text>
        </svg>
      </div>
    </nav>
  );
}

export default function App() {
  return (
    <div className="flex h-screen flex-col overflow-hidden font-['Open_Sans',sans-serif]">
      <div className="flex min-h-0 flex-1 flex-col bg-[linear-gradient(#00a884_123px,#dcdedc_123px,#d3d8dc_60%,#ced4d9)] pt-1 pr-5 pb-[21px]">
        <div className="flex min-h-0 flex-1 flex-col shadow-[0_6px_18px_rgba(11,20,26,0.06)]">
          <Header />
          <Chat />
          <Composer />
        </div>
      </div>
      <Taskbar />
    </div>
  );
}
